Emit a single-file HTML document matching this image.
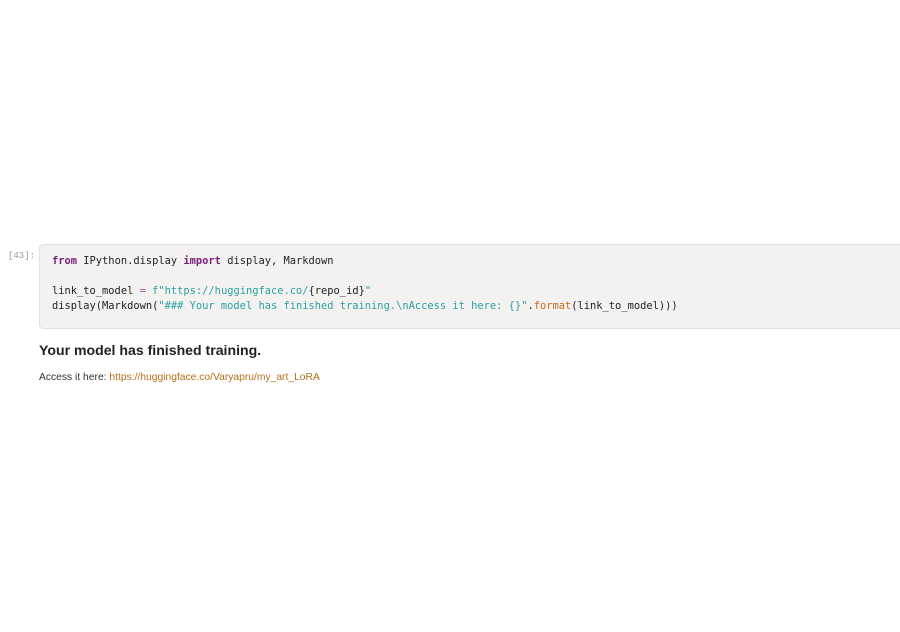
<!DOCTYPE html>
<html><head><meta charset="utf-8"><style>
body{margin:0;width:900px;height:632px;background:#fff;position:relative;overflow:hidden;font-family:"Liberation Sans",sans-serif}
.prompt{position:absolute;left:8px;top:251px;font:9px "Liberation Mono",monospace;color:#9a9a9a}
.cell{position:absolute;left:39px;top:244px;width:880px;height:83px;background:#f3f2f1;border:1px solid #e2e1e0;border-radius:4px}
pre{margin:0;position:absolute;left:12px;top:9px;font:10.4px/15px "DejaVu Sans Mono",monospace;color:#222}
.k{color:#7a1e7a;font-weight:bold}.o{color:#a0509a}.s{color:#2aa0a0}.f{color:#c46a1a}
h3{position:absolute;left:39px;top:342px;margin:0;font-size:14.1px;font-weight:bold;color:#222}
.p{position:absolute;left:39px;top:372px;font-size:10.3px;color:#333}
.p span{color:#b3701a}
</style></head><body>
<div class="prompt">[43]:</div>
<div class="cell"><pre><span class="k">from</span> IPython.display <span class="k">import</span> display, Markdown

link_to_model <span class="o">=</span> <span class="s">f"https://huggingface.co/</span>{repo_id}<span class="s">"</span>
display(Markdown(<span class="s">"### Your model has finished training.\nAccess it here: {}"</span>.<span class="f">format</span>(link_to_model)))</pre></div>
<h3>Your model has finished training.</h3>
<div class="p">Access it here: <span>https://huggingface.co/Varyapru/my_art_LoRA</span></div>
</body></html>
